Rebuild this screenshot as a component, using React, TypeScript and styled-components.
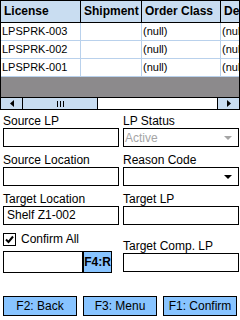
import React from "react";
import styled, { createGlobalStyle } from "styled-components";

const GlobalStyle = createGlobalStyle`
  html, body {
    margin: 0;
    padding: 0;
    background: #fff;
  }
  body {
    font-family: "Liberation Sans", Arial, sans-serif;
    color: #000;
  }
`;

const Screen = styled.div`
  width: 240px;
  height: 320px;
  display: flex;
  flex-direction: column;
  overflow: hidden;
  background: #fff;
`;

const GridBox = styled.div`
  height: 110px;
  box-sizing: border-box;
  border: 1px solid #000;
  display: flex;
  flex-direction: column;
  background: #8c8a8c;
  overflow: hidden;
`;

const HeaderRow = styled.div`
  display: flex;
  height: 21px;
  border-bottom: 1px solid #000;
  background: #c9ddf1;
  flex-shrink: 0;
`;

const HeaderCell = styled.div<{ $w: number }>`
  width: ${(p) => p.$w}px;
  flex-shrink: 0;
  box-sizing: border-box;
  border-right: 1px solid #000;
  padding-left: 3px;
  font-size: 12px;
  font-weight: bold;
  line-height: 21px;
  white-space: nowrap;
  overflow: hidden;
`;

const Row = styled.div`
  display: flex;
  height: 17px;
  border-bottom: 1px solid #b9d1ec;
  background: #fff;
  flex-shrink: 0;
`;

const Cell = styled.div<{ $w: number }>`
  width: ${(p) => p.$w}px;
  flex-shrink: 0;
  box-sizing: border-box;
  border-right: 1px solid #b9d1ec;
  padding-left: 1px;
  font-size: 11px;
  line-height: 17px;
  white-space: nowrap;
  overflow: hidden;
`;

const Filler = styled.div`
  flex: 1;
`;

const ScrollBar = styled.div`
  display: flex;
  height: 11px;
  border-top: 1px solid #000;
  background: #fff;
  flex-shrink: 0;
`;

const ScrollButton = styled.div<{ $side: "left" | "right" }>`
  width: 21px;
  flex-shrink: 0;
  background: #c9ddf1;
  ${(p) => (p.$side === "left" ? "border-right: 1px solid #000;" : "border-left: 1px solid #000;")}
  display: flex;
  align-items: center;
  justify-content: center;
`;

const Thumb = styled.div`
  width: 74px;
  flex-shrink: 0;
  background: #c9ddf1;
  border-right: 1px solid #000;
  display: flex;
  align-items: center;
  justify-content: center;
  gap: 2px;
`;

const Grip = styled.span`
  width: 1px;
  height: 6px;
  background: #000;
`;

const Track = styled.div`
  flex: 1;
`;

const Form = styled.div`
  display: grid;
  grid-template-columns: 116px 116px;
  column-gap: 4px;
  padding: 0 1px 0 3px;
`;

const Column = styled.div`
  display: flex;
  flex-direction: column;
`;

const Label = styled.div<{ $gap?: number }>`
  height: 18px;
  box-sizing: border-box;
  padding-top: 4px;
  margin-top: ${(p) => p.$gap ?? 0}px;
  font-size: 12px;
  line-height: 15px;
  white-space: nowrap;
`;

const TextBox = styled.div<{ $w?: number; $h?: number }>`
  width: ${(p) => (p.$w ? `${p.$w}px` : "100%")};
  height: ${(p) => p.$h ?? 19}px;
  box-sizing: border-box;
  border: 1px solid #000;
  padding: 0 3px;
  font-size: 12px;
  line-height: 17px;
  background: #fff;
  margin-bottom: 2px;
`;

const SelectBox = styled.div<{ $disabled?: boolean }>`
  height: 19px;
  box-sizing: border-box;
  border: 1px solid #000;
  display: flex;
  align-items: center;
  justify-content: space-between;
  padding: 0 6px 0 1px;
  font-size: 12px;
  color: ${(p) => (p.$disabled ? "#a5a5a5" : "#000")};
  margin-bottom: 2px;
`;

const Arrow = styled.span<{ $disabled?: boolean }>`
  width: 0;
  height: 0;
  border-left: 4px solid transparent;
  border-right: 4px solid transparent;
  border-top: 4px solid ${(p) => (p.$disabled ? "#a5a5a5" : "#000")};
`;

const CheckRow = styled.div`
  display: flex;
  align-items: center;
  gap: 5px;
  height: 20px;
  margin-top: 2px;
  font-size: 12px;
`;

const CheckBox = styled.div`
  width: 13px;
  height: 13px;
  box-sizing: border-box;
  border: 1px solid #000;
  display: flex;
  align-items: center;
  justify-content: center;
`;

const ScanRow = styled.div`
  display: flex;
  margin-top: 2px;
`;

const KeyButton = styled.div`
  width: 30px;
  height: 22px;
  box-sizing: border-box;
  border: 1px solid #000;
  border-left: 2px solid #000;
  background: #88c4ff;
  font-size: 12px;
  font-weight: bold;
  line-height: 20px;
  text-align: center;
  margin-left: -1px;
`;

const Footer = styled.div`
  margin-top: auto;
  display: flex;
  gap: 6px;
  padding: 0 3px 4px;
`;

const FooterButton = styled.div`
  flex: 1;
  height: 20px;
  box-sizing: border-box;
  border: 1px solid #000;
  background: #88c4ff;
  font-size: 12px;
  line-height: 18px;
  text-align: center;
  white-space: nowrap;
`;

const columns = [
  { title: "License", w: 80 },
  { title: "Shipment", w: 61 },
  { title: "Order Class", w: 79 },
  { title: "Description", w: 60 },
];

const rows = ["LPSPRK-003", "LPSPRK-002", "LPSPRK-001"];

const App = () => {
  return (
    <Screen>
      <GlobalStyle />
      <GridBox>
        <HeaderRow>
          {columns.map((c) => (
            <HeaderCell key={c.title} $w={c.w}>
              {c.title}
            </HeaderCell>
          ))}
        </HeaderRow>
        {rows.map((r) => (
          <Row key={r}>
            <Cell $w={80}>{r}</Cell>
            <Cell $w={61}></Cell>
            <Cell $w={79}>(null)</Cell>
            <Cell $w={60}>(null)</Cell>
          </Row>
        ))}
        <Filler />
        <ScrollBar>
          <ScrollButton $side="left">
            <svg width="4" height="7" viewBox="0 0 4 7">
              <path d="M4 0 L0 3.5 L4 7 Z" fill="#000" />
            </svg>
          </ScrollButton>
          <Thumb>
            <Grip />
            <Grip />
            <Grip />
          </Thumb>
          <Track />
          <ScrollButton $side="right">
            <svg width="4" height="7" viewBox="0 0 4 7">
              <path d="M0 0 L4 3.5 L0 7 Z" fill="#000" />
            </svg>
          </ScrollButton>
        </ScrollBar>
      </GridBox>

      <Form>
        <Column>
          <Label>Source LP</Label>
          <TextBox />
          <Label>Source Location</Label>
          <TextBox />
          <Label>Target Location</Label>
          <TextBox>Shelf Z1-002</TextBox>
          <CheckRow>
            <CheckBox>
              <svg width="9" height="9" viewBox="0 0 9 9">
                <path d="M1 4.5 L3.5 7 L8 1.5" stroke="#000" strokeWidth="2" fill="none" />
              </svg>
            </CheckBox>
            Confirm All
          </CheckRow>
          <ScanRow>
            <TextBox $w={80} $h={22} />
            <KeyButton>F4:R</KeyButton>
          </ScanRow>
        </Column>
        <Column>
          <Label>LP Status</Label>
          <SelectBox $disabled>
            Active
            <Arrow $disabled />
          </SelectBox>
          <Label>Reason Code</Label>
          <SelectBox>
            <span />
            <Arrow />
          </SelectBox>
          <Label>Target LP</Label>
          <TextBox />
          <Label $gap={8}>Target Comp. LP</Label>
          <TextBox />
        </Column>
      </Form>

      <Footer>
        <FooterButton>F2: Back</FooterButton>
        <FooterButton>F3: Menu</FooterButton>
        <FooterButton>F1: Confirm</FooterButton>
      </Footer>
    </Screen>
  );
};

export default App;
